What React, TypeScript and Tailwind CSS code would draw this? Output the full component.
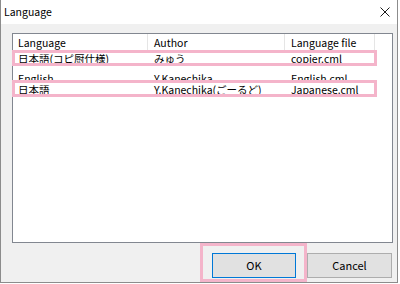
import React from 'react';

const font = { fontFamily: '"Noto Sans CJK JP", "Liberation Sans", sans-serif' };

const rows = [
  { lang: '日本語(コピ厨仕様)', author: 'みゅう', file: 'copier.cml', hidden: false, pad: 'pb-[3px]' },
  { lang: 'English', author: 'Y.Kanechika', file: 'English.cml', hidden: true, pad: '' },
  { lang: '日本語', author: 'Y.Kanechika(ごーるど)', file: 'Japanese.cml', hidden: false, pad: 'pb-[1px]' },
];

const CloseIcon = () => (
  <svg width="10" height="10" viewBox="0 0 10 10" className="block">
    <path d="M0.5 0.5 L9.5 9.5 M9.5 0.5 L0.5 9.5" stroke="#1a1a1a" strokeWidth="1" fill="none" />
  </svg>
);

const Cells = ({ lang, author, file }: { lang: string; author: string; file: string }) => (
  <>
    <div className="w-[135px] pl-[5px] whitespace-nowrap">{lang}</div>
    <div className="w-[137px] pl-[6px] whitespace-nowrap">{author}</div>
    <div className="w-[90px] pl-[6px] whitespace-nowrap">{file}</div>
  </>
);

export default function App() {
  return (
    <div className="relative w-[400px] h-[284px] bg-white overflow-hidden text-black" style={font}>
      <div className="flex flex-col w-[398px] h-[283px] border-l border-r border-b border-[#8c8c8c] bg-[#f0f0f0]">
        {/* title bar */}
        <div className="flex items-center justify-between h-[24px] bg-white pl-[3px] pr-[7px]">
          <span className="text-[10.5px] leading-none">Language</span>
          <CloseIcon />
        </div>

        {/* client */}
        <div className="flex flex-col flex-1 pl-[11px] pr-[4px] pt-[9px]">
          <div className="flex flex-col w-[381px] h-[210px] bg-white border border-[#828790]">
            <div className="flex h-[19px] text-[10.5px] leading-none">
              <div className="flex items-center w-[135px] pl-[5px] border-r border-[#e5e5e5]">Language</div>
              <div className="flex items-center w-[137px] pl-[6px] border-r border-[#e5e5e5]">Author</div>
              <div className="flex items-center w-[90px] pl-[6px] border-r border-[#e5e5e5]">Language file</div>
            </div>
            {rows.map((r, i) =>
              r.hidden ? (
                // row partly covered by the row pasted over it in the original capture
                <div key={i} className="h-[15px] overflow-hidden">
                  <div className="flex h-[15px] items-center pt-[8px] text-[10.5px] leading-none">
                    <Cells {...r} />
                  </div>
                </div>
              ) : (
                <div key={i} className={`flex h-[15px] items-center text-[10.5px] leading-none ${r.pad}`}>
                  <Cells {...r} />
                </div>
              )
            )}
          </div>

          <div className="flex justify-end gap-[11px] mt-[10px] pr-[1px]">
            <button className="w-[84px] h-[25px] bg-[#e1e1e1] border border-[#0078d7] text-[11px] leading-none" style={font}>
              OK
            </button>
            <button className="w-[85px] h-[25px] bg-[#e1e1e1] border border-[#adadad] text-[11px] leading-none" style={font}>
              Cancel
            </button>
          </div>
        </div>
      </div>

      {/* highlight annotations */}
      <div className="absolute left-[12px] top-[50px] w-[365px] h-[16px] border-[3px] border-[#f4b4ca]" />
      <div className="absolute left-[12px] top-[80px] w-[365px] h-[17px] border-[3px] border-[#f4b4ca]" />
      <div className="absolute left-[200px] top-[243px] w-[107px] h-[39px] border-[3px] border-[#f4b4ca]" />
    </div>
  );
}
